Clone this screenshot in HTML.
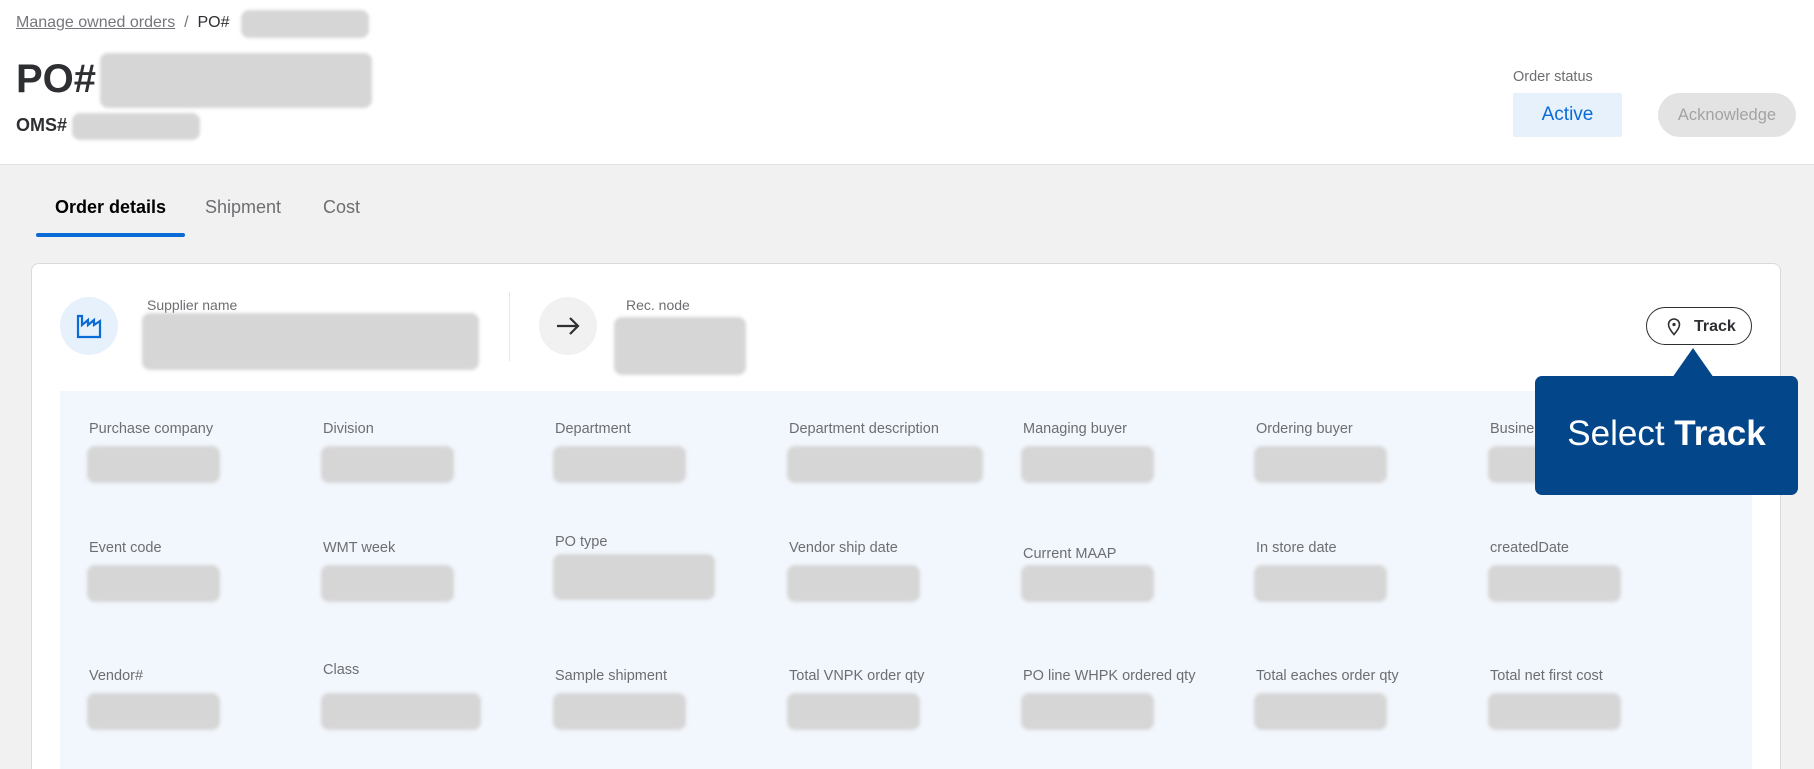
<!DOCTYPE html>
<html style="overflow:hidden;height:769px"><head><meta charset="utf-8"><style>
*{margin:0;padding:0;box-sizing:border-box}
body{width:1814px;height:769px;overflow:hidden;background:#f1f1f1;font-family:"Liberation Sans",sans-serif;color:#2e2f32;position:relative}
.a{position:absolute}
.blur{position:absolute;background:#d6d6d6;border-radius:8px;filter:blur(1.5px)}
.lbl{position:absolute;font-size:14.5px;color:#6d6e71}
</style></head><body>
<div class="a" style="left:0;top:0;width:1814px;height:165px;background:#fff;border-bottom:1px solid #e3e3e3"></div>
<div class="a" style="left:16px;top:14px;font-size:16px;color:#74767c"><span style="text-decoration:underline">Manage owned orders</span>&nbsp;&nbsp;/&nbsp;&nbsp;<span style="color:#2e2f32">PO#</span></div>
<div class="blur" style="left:241px;top:10px;width:128px;height:28px"></div>
<div class="a" style="left:16px;top:57px;font-size:40px;font-weight:bold;color:#2e2f32">PO#</div>
<div class="blur" style="left:100px;top:53px;width:272px;height:55px"></div>
<div class="a" style="left:16px;top:115px;font-size:18px;font-weight:bold">OMS#</div>
<div class="blur" style="left:72px;top:113px;width:128px;height:27px"></div>
<div class="a" style="left:1513px;top:69px;font-size:14.5px;color:#6d6e71">Order status</div>
<div class="a" style="left:1513px;top:93px;width:109px;height:44px;background:#e6f1fc;border-radius:2px;color:#0a6bd6;font-size:19px;text-align:center;line-height:44px">Active</div>
<div class="a" style="left:1658px;top:93px;width:138px;height:44px;background:#e3e3e3;border-radius:22px;color:#a3a3a3;font-size:16.5px;text-align:center;line-height:44px">Acknowledge</div>

<div class="a" style="left:55px;top:197px;font-size:18px;font-weight:bold;color:#000">Order details</div>
<div class="a" style="left:205px;top:197px;font-size:18px;color:#6d6e71">Shipment</div>
<div class="a" style="left:323px;top:197px;font-size:18px;color:#6d6e71">Cost</div>
<div class="a" style="left:36px;top:233px;width:149px;height:4px;background:#0a6bd6;border-radius:2px"></div>

<div class="a" style="left:31px;top:263px;width:1750px;height:506px;background:#fff;border:1px solid #dadada;border-bottom:none;border-radius:8px 8px 0 0"></div>
<div class="a" style="left:60px;top:297px;width:58px;height:58px;border-radius:50%;background:#e6f1fc"></div>
<svg class="a" style="left:75px;top:312px" width="28" height="28" viewBox="0 0 28 28"><path d="M3 25V4h4v9l6-5v5l6-5v5l6-4v16z" fill="none" stroke="#0a6bd6" stroke-width="2.2" stroke-linejoin="miter"/></svg>
<div class="lbl" style="left:147px;top:297px;font-size:14px">Supplier name</div>
<div class="blur" style="left:142px;top:313px;width:337px;height:57px"></div>
<div class="a" style="left:509px;top:292px;width:1px;height:69px;background:#e6e6e6"></div>
<div class="a" style="left:539px;top:297px;width:58px;height:58px;border-radius:50%;background:#f1f1f1"></div>
<svg class="a" style="left:554px;top:312px" width="28" height="28" viewBox="0 0 28 28"><path d="M3 14h21M16 6l8 8-8 8" fill="none" stroke="#2e2f32" stroke-width="2.2"/></svg>
<div class="lbl" style="left:626px;top:297px;font-size:14px">Rec. node</div>
<div class="blur" style="left:614px;top:317px;width:132px;height:58px"></div>
<div class="a" style="left:1646px;top:307px;width:106px;height:38px;border:1.5px solid #2e2f32;border-radius:19px;background:#fff"></div>
<svg class="a" style="left:1666px;top:318px" width="16" height="18" viewBox="0 0 16 18"><path d="M8 16.5C4 12 2.5 9 2.5 6.5a5.5 5.5 0 0 1 11 0C13.5 9 12 12 8 16.5z" fill="none" stroke="#2e2f32" stroke-width="1.6"/><circle cx="8" cy="6.5" r="1.6" fill="#2e2f32"/></svg>
<div class="a" style="left:1694px;top:318px;font-size:16px;font-weight:bold;color:#2e2f32">Track</div>

<div class="a" style="left:60px;top:391px;width:1692px;height:378px;background:#f2f7fd"></div>
<div id="g"></div>

<div class="a" style="left:1535px;top:376px;width:263px;height:119px;background:#03468a;border-radius:7px"></div>
<svg class="a" style="left:1670px;top:346px" width="46" height="32"><path d="M2 32L23 2 44 32z" fill="#03468a"/></svg>
<div class="a" style="left:1535px;top:414px;width:263px;text-align:center;font-size:35px;color:#fff">Select <b>Track</b></div>
<script>
var cols=[89,323,555,789,1023,1256,1490];
var rows=[["Purchase company","Division","Department","Department description","Managing buyer","Ordering buyer","Business"],
["Event code","WMT week","PO type","Vendor ship date","Current MAAP","In store date","createdDate"],
["Vendor#","Class","Sample shipment","Total VNPK order qty","PO line WHPK ordered qty","Total eaches order qty","Total net first cost"]];
var ys=[421,540,668],h="";
var bw=[[133,133,133,196,133,133,133],[133,133,162,133,133,133,133],[133,160,133,133,133,133,133]];
var off=[[0,0,0,0,0,0,0],[0,0,-6,0,6,0,0],[0,-6,0,0,0,0,0]];
for(var r=0;r<3;r++)for(var c=0;c<7;c++){
var x=cols[c],y=ys[r]+off[r][c];
h+='<div class="lbl" style="left:'+x+'px;top:'+y+'px">'+rows[r][c]+'</div>';
var bx=x-2,by=ys[r]+25;if(r==1&&c==2){by=ys[r]+14}
h+='<div class="blur" style="left:'+bx+'px;top:'+by+'px;width:'+bw[r][c]+'px;height:'+(r==1&&c==2?46:37)+'px"></div>';}
document.getElementById('g').innerHTML=h;
</script>
</body></html>
